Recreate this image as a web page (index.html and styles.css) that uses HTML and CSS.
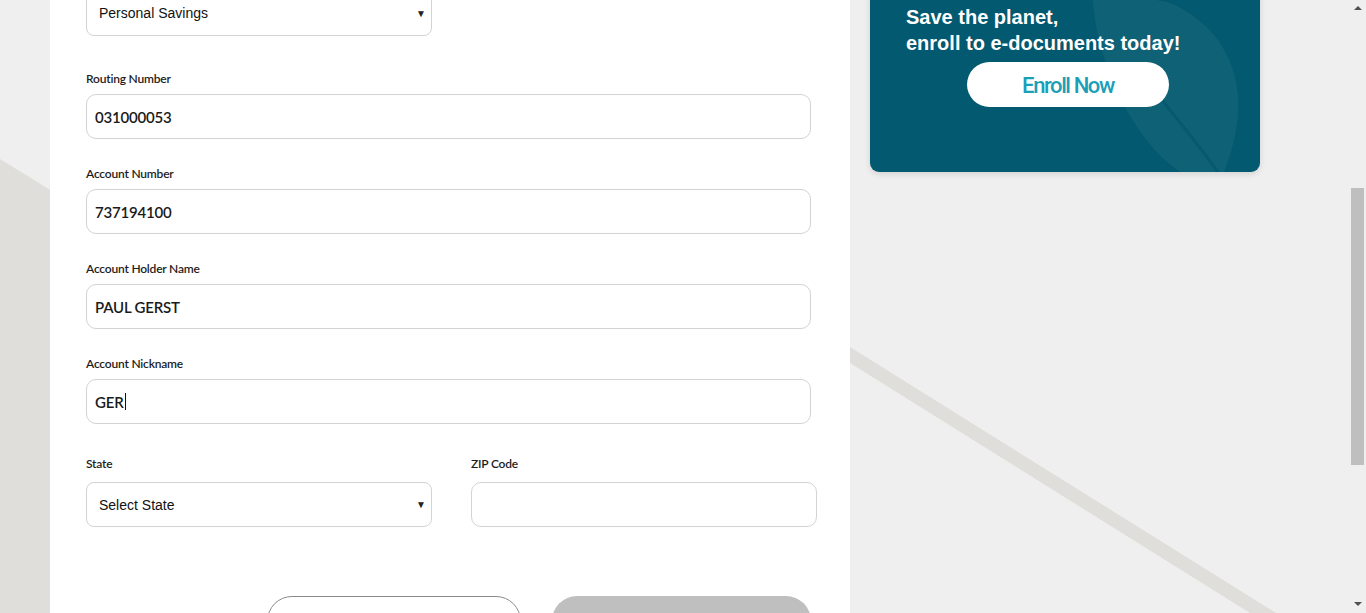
FILE: index.html
```html
<!DOCTYPE html>
<html lang="en">
<head>
<meta charset="utf-8">
<title>Add Account</title>
<link rel="stylesheet" href="styles.css">
</head>
<body>
<svg class="deco" width="1366" height="613" viewBox="0 0 1366 613" aria-hidden="true">
  <polygon points="0,159 60,196 60,613 0,613" fill="#e0deda"/>
  <polygon points="850,347 1276,613 1250,613 850,363" fill="#e0deda"/>
</svg>
<div class="page">
  <main class="panel">
    <div class="select select-top"><span>Personal Savings</span><span class="arrow">▼</span></div>

    <div class="field first">
      <label class="label">Routing Number</label>
      <div class="input">031000053</div>
    </div>
    <div class="field">
      <label class="label">Account Number</label>
      <div class="input">737194100</div>
    </div>
    <div class="field">
      <label class="label">Account Holder Name</label>
      <div class="input">PAUL GERST</div>
    </div>
    <div class="field">
      <label class="label">Account Nickname</label>
      <div class="input">GER<span class="caret"></span></div>
    </div>

    <div class="row">
      <div class="col">
        <label class="label">State</label>
        <div class="select"><span>Select State</span><span class="arrow">▼</span></div>
      </div>
      <div class="col">
        <label class="label">ZIP Code</label>
        <div class="input input-half"></div>
      </div>
    </div>

    <div class="actions">
      <div class="btn btn-outline"></div>
      <div class="btn btn-fill"></div>
    </div>
  </main>

  <aside class="side">
    <div class="promo">
      <svg class="leaf" width="390" height="172" viewBox="0 0 390 172" aria-hidden="true">
        <path d="M223 0 C 226 60, 262 140, 310 172 L 354 172 C 374 120, 374 78, 348 40 C 328 14, 300 0, 285 0 Z" fill="#ffffff" fill-opacity="0.05"/>
        <path d="M268 70 C 298 108, 325 140, 348 172" stroke="#03596f" stroke-width="3" fill="none" opacity="0.8"/>
      </svg>
      <p class="promo-text">Save the planet,<br>enroll to e-documents today!</p>
      <div class="enroll">Enroll Now</div>
    </div>
  </aside>
</div>
<div class="scrollbar" aria-hidden="true">
  <span class="sb-up"></span>
  <span class="sb-thumb"></span>
  <span class="sb-down"></span>
</div>
</body>
</html>
```

FILE: styles.css
```css
* { box-sizing: border-box; }
html, body { margin: 0; padding: 0; }
body {
  background: #efefef;
  width: 1366px;
  height: 613px;
  overflow: hidden;
  position: relative;
  font-family: Lato, "Noto Sans", sans-serif;
  color: #222;
}
.deco { position: absolute; left: 0; top: 0; z-index: 0; }
.page {
  position: relative;
  z-index: 1;
  display: flex;
  align-items: flex-start;
  padding-left: 50px;
}
.panel {
  width: 800px;
  height: 623px;
  overflow: hidden;
  background: #fff;
  padding: 0 39px 0 36px;
  margin-top: -10px;
}
.select {
  width: 346px;
  height: 45px;
  border: 1px solid #d3d3d3;
  border-radius: 8px;
  display: flex;
  align-items: center;
  justify-content: space-between;
  padding: 0 5px 0 12px;
  font-family: "Liberation Sans", Arial, sans-serif;
  font-size: 14px;
  color: #111;
  background: #fff;
}
.select-top { height: 46px; }
.select .arrow { font-size: 10px; color: #222; }
.field { margin-top: 26px; }
.field.first { margin-top: 34px; }
.label {
  display: block;
  font-size: 12px;
  font-weight: 600;
  line-height: 16px;
  height: 17px;
  padding-top: 1px;
  margin-bottom: 7px;
  color: #1d1d1d;
  letter-spacing: -0.2px;
}
.input {
  width: 725px;
  height: 45px;
  border: 1px solid #d3d3d3;
  border-radius: 10px;
  display: flex;
  align-items: center;
  padding: 0 8px;
  font-size: 15px;
  font-weight: 600;
  color: #1a1a1a;
  background: #fff;
  letter-spacing: -0.2px;
}
.input-half { width: 346px; }
.caret {
  display: inline-block;
  width: 1px;
  height: 17px;
  background: #111;
  margin-left: 1px;
}
.row {
  display: flex;
  gap: 39px;
  margin-top: 31px;
}
.row .label { margin-bottom: 10px; }
.actions {
  display: flex;
  justify-content: flex-end;
  gap: 31px;
  margin-top: 69px;
}
.btn { height: 50px; border-radius: 26px; }
.btn-outline { width: 254px; border: 1px solid #8a8a8a; background: #fff; }
.btn-fill { width: 259px; background: #bfbfbf; }

.side { padding-left: 20px; }
.promo {
  position: relative;
  width: 390px;
  height: 182px;
  margin-top: -10px;
  background: #03596f;
  border-radius: 0 0 9px 9px;
  box-shadow: 0 2px 6px rgba(0,0,0,0.12);
  overflow: hidden;
  padding: 14px 0 0 36px;
  color: #fff;
}
.leaf { position: absolute; left: 0; top: 10px; }
.promo-text {
  position: relative;
  margin: 0;
  font-family: "Liberation Sans", Arial, sans-serif;
  font-weight: 700;
  font-size: 20px;
  line-height: 26px;
}
.enroll {
  position: relative;
  margin: 6px 0 0 61px;
  width: 202px;
  height: 45px;
  border-radius: 23px;
  background: #fff;
  color: #1b9fb8;
  font-family: Roboto, sans-serif;
  font-weight: 500;
  font-size: 22px;
  letter-spacing: -1.4px;
  display: flex;
  align-items: center;
  justify-content: center;
  padding-top: 2px;
}

.scrollbar {
  position: absolute;
  right: 0;
  top: 0;
  width: 17px;
  height: 613px;
  background: #efefef;
  z-index: 2;
}
.sb-thumb {
  position: absolute;
  left: 2px;
  top: 188px;
  width: 13px;
  height: 277px;
  background: #bfbfbf;
}
.sb-up, .sb-down {
  position: absolute;
  left: 5px;
  width: 0; height: 0;
  border-left: 4px solid transparent;
  border-right: 4px solid transparent;
}
.sb-up { top: 6px; border-bottom: 4px solid #505050; }
.sb-down { top: 602px; border-top: 4px solid #505050; }
```
